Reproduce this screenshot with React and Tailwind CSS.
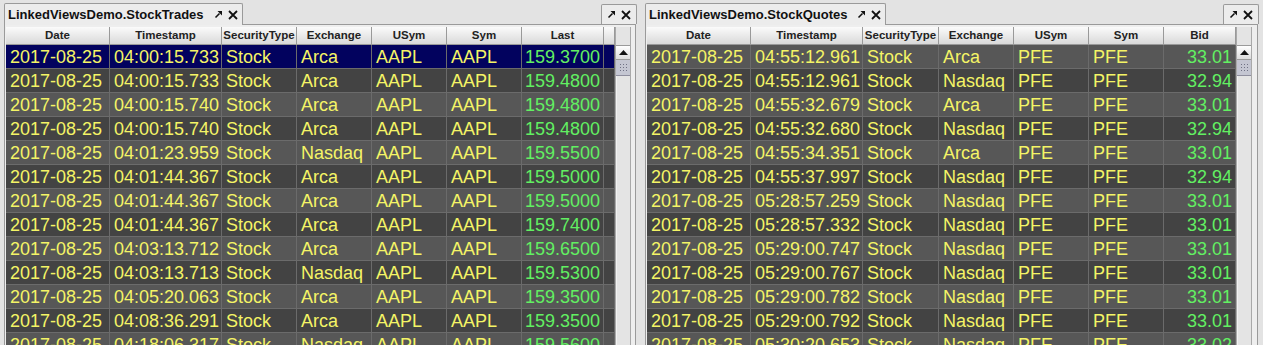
import React from 'react';

const tradeCols = [
  { name: 'Date', w: 'w-[104px]' },
  { name: 'Timestamp', w: 'w-[112px]' },
  { name: 'SecurityType', w: 'w-[75px]' },
  { name: 'Exchange', w: 'w-[75px]' },
  { name: 'USym', w: 'w-[75px]' },
  { name: 'Sym', w: 'w-[75px]' },
  { name: 'Last', w: 'w-[82px]', num: true },
  { name: '', w: 'w-[11px]' },
];

const quoteCols = [
  { name: 'Date', w: 'w-[104px]' },
  { name: 'Timestamp', w: 'w-[112px]' },
  { name: 'SecurityType', w: 'w-[76px]' },
  { name: 'Exchange', w: 'w-[75px]' },
  { name: 'USym', w: 'w-[75px]' },
  { name: 'Sym', w: 'w-[75px]' },
  { name: 'Bid', w: 'w-[72px]', num: true },
];

const trades = [
  ['04:00:15.733', 'Arca', '159.3700'],
  ['04:00:15.733', 'Arca', '159.4800'],
  ['04:00:15.740', 'Arca', '159.4800'],
  ['04:00:15.740', 'Arca', '159.4800'],
  ['04:01:23.959', 'Nasdaq', '159.5500'],
  ['04:01:44.367', 'Arca', '159.5000'],
  ['04:01:44.367', 'Arca', '159.5000'],
  ['04:01:44.367', 'Arca', '159.7400'],
  ['04:03:13.712', 'Arca', '159.6500'],
  ['04:03:13.713', 'Nasdaq', '159.5300'],
  ['04:05:20.063', 'Arca', '159.3500'],
  ['04:08:36.291', 'Arca', '159.3500'],
  ['04:18:06.317', 'Nasdaq', '159.5600'],
].map(([t, ex, px]) => ['2017-08-25', t, 'Stock', ex, 'AAPL', 'AAPL', px, '']);

const quotes = [
  ['04:55:12.961', 'Arca', '33.01'],
  ['04:55:12.961', 'Nasdaq', '32.94'],
  ['04:55:32.679', 'Arca', '33.01'],
  ['04:55:32.680', 'Nasdaq', '32.94'],
  ['04:55:34.351', 'Arca', '33.01'],
  ['04:55:37.997', 'Nasdaq', '32.94'],
  ['05:28:57.259', 'Nasdaq', '33.01'],
  ['05:28:57.332', 'Nasdaq', '33.01'],
  ['05:29:00.747', 'Nasdaq', '33.01'],
  ['05:29:00.767', 'Nasdaq', '33.01'],
  ['05:29:00.782', 'Nasdaq', '33.01'],
  ['05:29:00.792', 'Nasdaq', '33.01'],
  ['05:30:20.653', 'Nasdaq', '33.02'],
].map(([t, ex, px]) => ['2017-08-25', t, 'Stock', ex, 'PFE', 'PFE', px]);

const UndockIcon = () => (
  <svg width="9" height="9" viewBox="0 0 9 9">
    <path d="M1.5 7.5 L5.5 3.5" stroke="#111" strokeWidth="1.6" />
    <path d="M3.5 1 L8 1 L8 5.5 Z" fill="#111" />
  </svg>
);

const CloseIcon = () => (
  <svg width="10" height="10" viewBox="0 0 10 10">
    <path d="M1 1 L9 9 M9 1 L1 9" stroke="#111" strokeWidth="1.8" />
  </svg>
);

const TabButtons = () => (
  <div className="flex items-center gap-[5px]">
    <UndockIcon />
    <CloseIcon />
  </div>
);

const Scrollbar = () => (
  <div className="flex w-[16px] shrink-0 flex-col border-x border-[#a9a9a9] bg-[#e4e4e4]">
    <div className="h-[18px] shrink-0 bg-[#e4e4e4]" />
    <div className="flex h-[15px] shrink-0 items-center justify-center border-y border-[#9a9a9a] bg-gradient-to-b from-[#ffffff] to-[#dcdcdc]">
      <svg width="9" height="5" viewBox="0 0 9 5">
        <path d="M0 5 L4.5 0 L9 5 Z" fill="#111" />
      </svg>
    </div>
    <div className="h-[16px] shrink-0 border-b border-[#8e8e9e] bg-[#c4c6d2]">
      <svg width="14" height="15" viewBox="0 0 14 15">
        <defs>
          <pattern id="dots" width="3" height="3" patternUnits="userSpaceOnUse">
            <rect x="1" y="1" width="1" height="1" fill="#6f7184" />
          </pattern>
        </defs>
        <rect x="2" y="2" width="10" height="11" fill="url(#dots)" />
      </svg>
    </div>
    <div className="flex-1 border-l border-[#f2f2f2]" />
  </div>
);

const Table = ({ cols, rows, selected }) => (
  <div className="flex">
    <div className="flex flex-col overflow-hidden">
      <div className="flex h-[18px] shrink-0">
        {cols.map((c, i) => (
          <div
            key={i}
            className={`${c.w} flex shrink-0 items-center justify-center overflow-hidden whitespace-nowrap border-r border-b border-[#999999] bg-gradient-to-b from-[#fbfbfb] to-[#d9d9d9] text-[11.5px] font-bold text-[#222222]`}
          >
            {c.name}
          </div>
        ))}
      </div>
      {rows.map((r, ri) => (
        <div
          key={ri}
          className={`flex h-[24px] shrink-0 border-b border-[#6b6b6b] ${
            ri === selected ? 'bg-[#02025e]' : ri % 2 === 0 ? 'bg-[#575757]' : 'bg-[#434343]'
          }`}
        >
          {cols.map((c, ci) => (
            <div
              key={ci}
              className={`${c.w} flex shrink-0 items-center overflow-hidden whitespace-nowrap border-r border-[#6b6b6b] text-[18px] leading-none ${
                c.num ? 'justify-end pr-[3px] text-[#62f062]' : 'pl-[4px] text-[#f4f466]'
              }`}
            >
              {r[ci]}
            </div>
          ))}
        </div>
      ))}
    </div>
  </div>
);

const Panel = ({ title, cols, rows, selected, width }) => (
  <div className={`flex h-full ${width} shrink-0 flex-col`}>
    <div className="flex h-[24px] shrink-0 items-end justify-between">
      <div className="relative z-10 -mb-px flex h-[22px] items-center gap-[10px] rounded-t-[2px] border border-b-0 border-[#9a9a9a] bg-[#ececec] pl-[3px] pr-[4px] text-[13px] font-bold text-[#111111]">
        <span>{title}</span>
        <TabButtons />
      </div>
      <div className="-mr-px flex h-[20px] items-center rounded-t-[2px] border border-b-0 border-[#9a9a9a] bg-[#ececec] px-[5px]">
        <TabButtons />
      </div>
    </div>
    <div className="flex min-h-0 flex-1 border border-b-0 border-[#9a9a9a] bg-[#eeeeee] pl-[1px] pr-[4px] pt-[2px]">
      <Table cols={cols} rows={rows} selected={selected} />
      <Scrollbar />
    </div>
  </div>
);

export default function App() {
  return (
    <div
      className="flex h-[345px] w-[1263px] gap-[9px] overflow-hidden bg-[#e3e3e3] pl-[4px]"
      style={{ fontFamily: '"Liberation Sans", Arial, sans-serif' }}
    >
      <Panel
        title="LinkedViewsDemo.StockTrades"
        cols={tradeCols}
        rows={trades}
        selected={0}
        width="w-[632px]"
      />
      <Panel
        title="LinkedViewsDemo.StockQuotes"
        cols={quoteCols}
        rows={quotes}
        selected={-1}
        width="w-[613px]"
      />
    </div>
  );
}
